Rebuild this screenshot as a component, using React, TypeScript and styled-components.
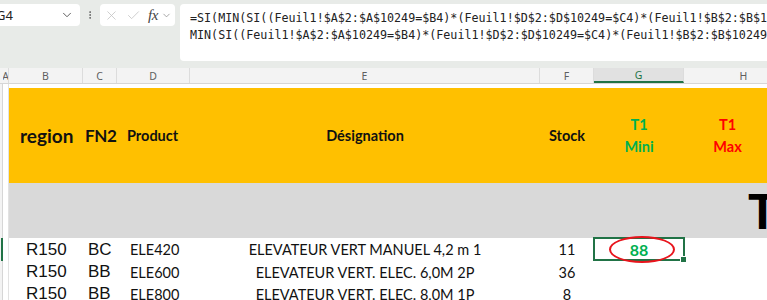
import styled, { createGlobalStyle } from 'styled-components'
import { ChevronDown, EllipsisVertical, X, Check } from 'lucide-react'

const GlobalStyle = createGlobalStyle`
	body {
		margin: 0;
		background: #ffffff;
	}
`

const COLS = '3px 6px 74px 34px 73px 350px 54px 90px 120px'

const Frame = styled.div`
	width: 767px;
	height: 300px;
	overflow: hidden;
	display: flex;
	flex-direction: column;
	background: #ffffff;
	font-family: 'Lato', 'Liberation Sans', sans-serif;
`

const FormulaBar = styled.div`
	display: flex;
	align-items: flex-start;
	gap: 5px;
	height: 68px;
	padding-top: 4px;
	box-sizing: border-box;
	background: #e8ebe8;
	flex-shrink: 0;
`

const NameBox = styled.div`
	display: flex;
	align-items: center;
	justify-content: space-between;
	width: 84px;
	height: 22px;
	margin-left: -4px;
	padding: 0 6px 0 0;
	box-sizing: border-box;
	background: #ffffff;
	border-radius: 4px;
	font-family: 'Noto Sans', sans-serif;
	font-size: 13px;
	color: #222;
	svg {
		color: #555;
	}
`

const Dots = styled.div`
	display: flex;
	align-items: center;
	justify-content: center;
	width: 10px;
	height: 22px;
	color: #666;
`

const FuncBox = styled.div`
	display: flex;
	align-items: center;
	gap: 7px;
	width: 75px;
	height: 22px;
	padding: 0 2px 0 4px;
	box-sizing: border-box;
	background: #ffffff;
	border-radius: 4px;
	color: #c4c4c4;
`

const Fx = styled.span`
	font-family: 'Liberation Serif', serif;
	font-style: italic;
	font-size: 15px;
	color: #444;
	letter-spacing: -0.5px;
	margin-right: -4px;
`

const FormulaBox = styled.div`
	flex: 1;
	min-width: 0;
	height: 57px;
	padding: 6px 0 0 10px;
	box-sizing: border-box;
	background: #ffffff;
	border-radius: 4px 0 0 4px;
	font-family: 'DejaVu Sans Mono', 'Liberation Mono', monospace;
	font-size: 11.7px;
	line-height: 17px;
	color: #222;
	white-space: pre;
	overflow: hidden;
`

const HeaderRow = styled.div`
	display: grid;
	grid-template-columns: ${COLS};
	height: 15px;
	background: #f3f3f3;
	border-bottom: 1px solid #d6d6d6;
	flex-shrink: 0;
`

const ColHead = styled.div<{ $selected?: boolean }>`
	display: flex;
	align-items: center;
	justify-content: center;
	font-family: 'Noto Sans', sans-serif;
	font-size: 10.5px;
	color: ${p => (p.$selected ? '#217346' : '#5f5f5f')};
	background: ${p => (p.$selected ? '#e1e1e1' : 'transparent')};
	border-right: 1px solid #dcdcdc;
	border-bottom: ${p => (p.$selected ? '2px solid #217346' : 'none')};
	box-sizing: border-box;
	overflow: hidden;
`

const Sheet = styled.div`
	display: grid;
	grid-template-columns: ${COLS};
	grid-template-rows: 4px 95px 55px 23px 22px 22px;
`

const RowHead = styled.div<{ $selected?: boolean }>`
	background: #f3f3f3;
	border-right: 1px solid ${p => (p.$selected ? '#217346' : '#d6d6d6')};
	${p => p.$selected && 'border-right-width: 2px;'}
	box-sizing: border-box;
`

const Cell = styled.div<{ $align?: string }>`
	display: flex;
	align-items: center;
	justify-content: ${p => p.$align || 'flex-start'};
	white-space: nowrap;
	overflow: visible;
	position: relative;
`

const ColA = styled.div`
	border-right: 1px solid #e2e2e2;
`

const YellowCell = styled(Cell)`
	background: #ffc000;
	font-weight: 700;
	color: #111;
`

const GreyCell = styled(Cell)`
	background: #d9d9d9;
`

const Region = styled.span`
	font-size: 19px;
	padding-left: 11px;
`

const Fn2 = styled.span`
	font-size: 17px;
	letter-spacing: -0.3px;
	padding-left: 2px;
`

const HeadLabel = styled.span`
	font-size: 14.5px;
`

const Stacked = styled.div<{ $color: string }>`
	display: flex;
	flex-direction: column;
	align-items: center;
	gap: 2px;
	font-size: 14.5px;
	line-height: 20px;
	color: ${p => p.$color};
`

const BigTitle = styled.span`
	font-family: 'Lato', sans-serif;
	font-weight: 900;
	font-size: 48px;
	color: #000;
	padding-left: 64px;
`

const Arial = styled.span<{ $pad?: number }>`
	font-family: 'Liberation Sans', Arial, sans-serif;
	font-size: 17px;
	color: #111;
	padding-left: ${p => p.$pad ?? 0}px;
`

const Calibri = styled.span<{ $pad?: number }>`
	font-size: 14.5px;
	color: #111;
	padding-left: ${p => p.$pad ?? 0}px;
`

const SelectedCell = styled(Cell)`
	border: 2px solid #217346;
	margin: -1px -1px 0 -1px;
	box-sizing: border-box;
	justify-content: center;
`

const FillHandle = styled.div`
	position: absolute;
	right: -4px;
	bottom: -4px;
	width: 5px;
	height: 5px;
	background: #217346;
	border: 1px solid #ffffff;
`

const Circled = styled.div`
	position: absolute;
	left: 14px;
	top: -3px;
	width: 66px;
	height: 27px;
	border: 2px solid #e8141c;
	border-radius: 50%;
	box-sizing: border-box;
`

const GreenValue = styled.span`
	font-weight: 700;
	font-size: 16px;
	color: #00b050;
`

const rows = [
	{ region: 'R150', fn2: 'BC', product: 'ELE420', label: 'ELEVATEUR VERT MANUEL 4,2 m 1', stock: '11' },
	{ region: 'R150', fn2: 'BB', product: 'ELE600', label: 'ELEVATEUR VERT. ELEC. 6,0M 2P', stock: '36' },
	{ region: 'R150', fn2: 'BB', product: 'ELE800', label: 'ELEVATEUR VERT. ELEC. 8,0M 1P', stock: '8' },
]

const formula1 = '=SI(MIN(SI((Feuil1!$A$2:$A$10249=$B4)*(Feuil1!$D$2:$D$10249=$C4)*(Feuil1!$B$2:$B$10249=$B4)'
const formula2 = 'MIN(SI((Feuil1!$A$2:$A$10249=$B4)*(Feuil1!$D$2:$D$10249=$C4)*(Feuil1!$B$2:$B$10249=$B4)'

export default () => {
	return (
		<Frame>
			<GlobalStyle />
			<FormulaBar>
				<NameBox>
					<span>G4</span>
					<ChevronDown size={14} strokeWidth={1.6} />
				</NameBox>
				<Dots>
					<EllipsisVertical size={14} strokeWidth={2.4} />
				</Dots>
				<FuncBox>
					<X size={15} strokeWidth={1.3} />
					<Check size={15} strokeWidth={1.3} />
					<Fx>fx</Fx>
					<ChevronDown size={11} strokeWidth={1.6} color='#888' />
				</FuncBox>
				<FormulaBox>
					{formula1}
					{'\n'}
					{formula2}
				</FormulaBox>
			</FormulaBar>

			<HeaderRow>
				<div />
				<ColHead>A</ColHead>
				<ColHead>B</ColHead>
				<ColHead>C</ColHead>
				<ColHead>D</ColHead>
				<ColHead>E</ColHead>
				<ColHead>F</ColHead>
				<ColHead $selected>G</ColHead>
				<ColHead>H</ColHead>
			</HeaderRow>

			<Sheet>
				{/* row 1 */}
				<RowHead />
				<ColA />
				<Cell style={{ gridColumn: '3 / 10' }} />

				{/* row 2: headers */}
				<RowHead />
				<ColA />
				<YellowCell>
					<Region>region</Region>
				</YellowCell>
				<YellowCell>
					<Fn2>FN2</Fn2>
				</YellowCell>
				<YellowCell>
					<HeadLabel style={{ paddingLeft: 10 }}>Product</HeadLabel>
				</YellowCell>
				<YellowCell $align='center'>
					<HeadLabel>Désignation</HeadLabel>
				</YellowCell>
				<YellowCell $align='center'>
					<HeadLabel>Stock</HeadLabel>
				</YellowCell>
				<YellowCell $align='center'>
					<Stacked $color='#00b050'>
						<span>T1</span>
						<span>Mini</span>
					</Stacked>
				</YellowCell>
				<YellowCell>
					<Stacked $color='#ff0000' style={{ width: 87 }}>
						<span>T1</span>
						<span>Max</span>
					</Stacked>
				</YellowCell>

				{/* row 3: grey band */}
				<RowHead />
				<ColA />
				<GreyCell style={{ gridColumn: '3 / 9' }} />
				<GreyCell>
					<BigTitle>T</BigTitle>
				</GreyCell>

				{/* data rows */}
				{rows.map((row, i) => (
					<>
						<RowHead key={`h${i}`} $selected={i === 0} />
						<ColA key={`a${i}`} />
						<Cell key={`b${i}`}>
							<Arial $pad={17}>{row.region}</Arial>
						</Cell>
						<Cell key={`c${i}`}>
							<Arial $pad={5}>{row.fn2}</Arial>
						</Cell>
						<Cell key={`d${i}`}>
							<Calibri $pad={13}>{row.product}</Calibri>
						</Cell>
						<Cell key={`e${i}`} $align='center'>
							<Calibri>{row.label}</Calibri>
						</Cell>
						<Cell key={`f${i}`} $align='center'>
							<Calibri>{row.stock}</Calibri>
						</Cell>
						{i === 0 ? (
							<SelectedCell key={`g${i}`}>
								<GreenValue>88</GreenValue>
								<Circled />
								<FillHandle />
							</SelectedCell>
						) : (
							<Cell key={`g${i}`} />
						)}
						<Cell key={`x${i}`} />
					</>
				))}
			</Sheet>
		</Frame>
	)
}
